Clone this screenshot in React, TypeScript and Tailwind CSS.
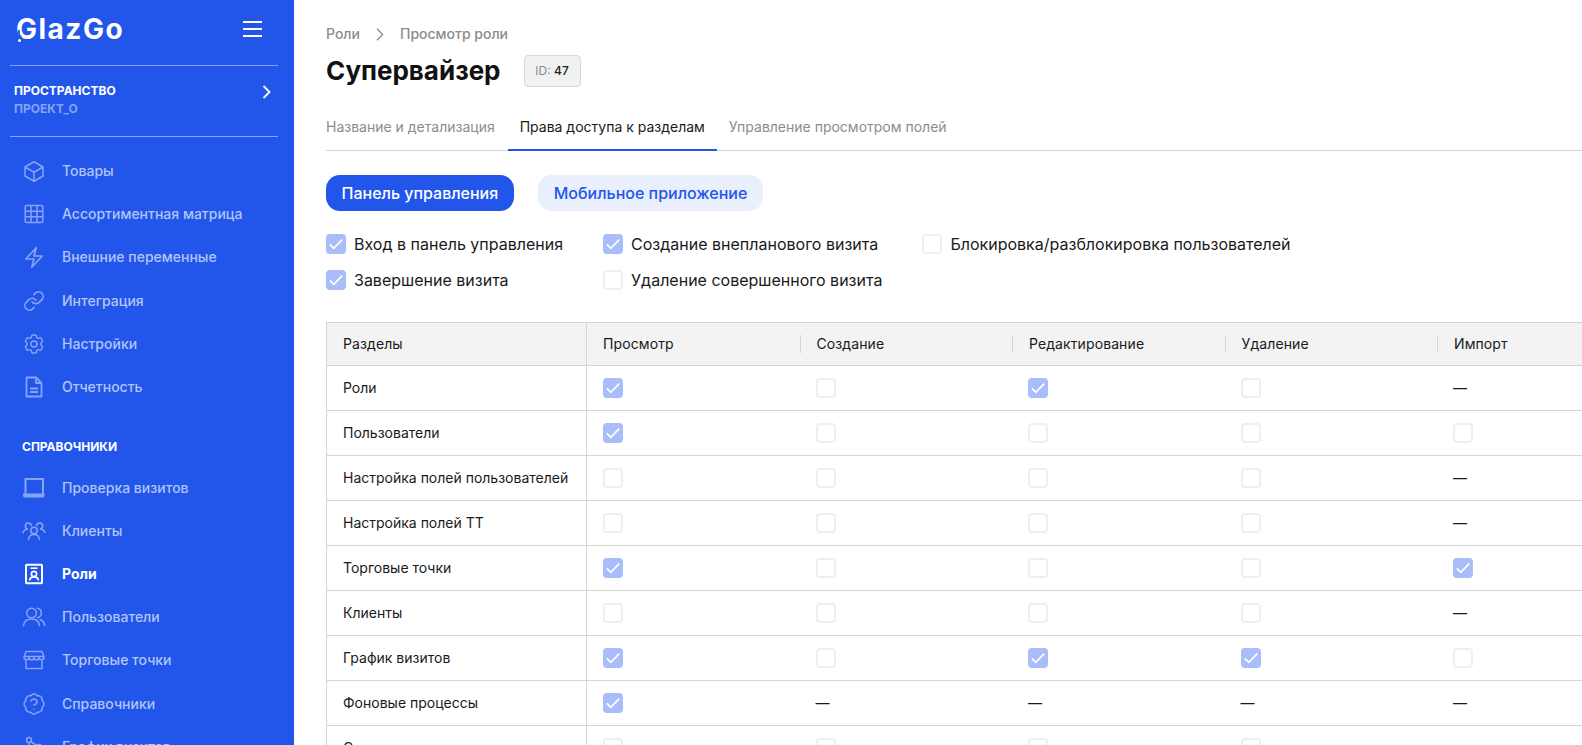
import type { ReactNode } from "react";
import { BadgeQuestionMark, Link } from "lucide-react";
import { HiOutlineBolt, HiOutlineCog6Tooth, HiOutlineCube } from "react-icons/hi2";

const GridIcon = () => (
  <svg width="24" height="24" viewBox="0 0 24 24" fill="none" stroke="currentColor" strokeWidth="1.500">
    <rect x="3.200" y="3.500" width="17.600" height="17" rx="1.500" />
    <path d="M9 3.500v17M15 3.500v17M3.200 9.200h17.600M3.200 14.800h17.600" />
  </svg>
);

const DocIcon = () => (
  <svg width="24" height="24" viewBox="0 0 24 24" fill="none" stroke="currentColor" strokeWidth="1.800" strokeLinejoin="round">
    <path d="M4.500 2.500h9.500l5.500 5.500v13.500h-15z" />
    <path d="M14 2.500V8h5.500" />
    <path d="M8 13.500h8M8 17h8" />
  </svg>
);

const LaptopIcon = () => (
  <svg width="24" height="24" viewBox="0 0 24 24" fill="none" stroke="currentColor" strokeWidth="2">
    <path d="M3.500 18V3h17.500v15" />
    <path d="M1 17.500h21.500v2a2 2 0 0 1-2 2H3a2 2 0 0 1-2-2z" fill="currentColor" stroke="none" />
  </svg>
);

const ClientsIcon = () => (
  <svg width="24" height="24" viewBox="0 0 24 24" fill="none" stroke="currentColor" strokeWidth="1.500" strokeLinecap="round">
    <circle cx="12" cy="11.500" r="3.200" />
    <path d="M6.500 20.500c.4-3.300 2.700-5 5.500-5s5.100 1.700 5.500 5" />
    <path d="M9.300 6.500a3 3 0 1 0-3.300 3.500c-2.200 0-4 1.200-5 3.500" />
    <path d="M14.700 6.500a3 3 0 1 1 3.300 3.500c2.200 0 4 1.200 5 3.500" />
  </svg>
);

const RoleIcon = () => (
  <svg width="24" height="24" viewBox="0 0 24 24" fill="none" stroke="currentColor" strokeWidth="1.600">
    <rect x="4" y="2.800" width="16" height="18.400" rx="0.600" strokeWidth="2" />
    <path d="M8.500 6.200h7" />
    <circle cx="12" cy="12" r="2.600" />
    <path d="M7.500 18.500c.3-2.400 2-3.600 4.500-3.600s4.200 1.200 4.500 3.600" />
  </svg>
);

const UsersIcon = () => (
  <svg width="24" height="24" viewBox="0 0 24 24" fill="none" stroke="currentColor" strokeWidth="1.500" strokeLinecap="round">
    <circle cx="9.500" cy="8" r="4.800" />
    <path d="M1.500 20.500c.5-4 3.700-6.500 8-6.500s7.500 2.500 8 6.500" />
    <path d="M15.500 3.300a4.800 4.800 0 0 1 0 9.400" />
    <path d="M18 14.500c2.500.8 4.200 3 4.800 6" />
  </svg>
);

const StoreIcon = () => (
  <svg width="24" height="24" viewBox="0 0 24 24" fill="none" stroke="currentColor" strokeWidth="1.500" strokeLinejoin="round">
    <path d="M4 3.500h16l2 5.500a2.500 2.500 0 0 1-5 .5 2.500 2.500 0 0 1-5 0 2.500 2.500 0 0 1-5 0 2.500 2.500 0 0 1-5-.5z" />
    <path d="M2 8.500h20" />
    <path d="M4 12.500v8h16v-8" />
  </svg>
);

const ScheduleIcon = () => (
  <svg width="24" height="24" viewBox="0 0 24 24" fill="none" stroke="currentColor" strokeWidth="1.500">
    <circle cx="7" cy="5" r="2.500" />
    <circle cx="17" cy="12" r="2.500" />
    <circle cx="7" cy="19" r="2.500" />
    <path d="M9 7l6 3.500M7 7.500v9" />
  </svg>
);

const topItems: { label: string; icon: ReactNode }[] = [
  { label: "Товары", icon: <HiOutlineCube size={25} strokeWidth={1.5} /> },
  { label: "Ассортиментная матрица", icon: <GridIcon /> },
  { label: "Внешние переменные", icon: <HiOutlineBolt size={25} strokeWidth={1.7} /> },
  { label: "Интеграция", icon: <Link size={22} strokeWidth={1.8} /> },
  { label: "Настройки", icon: <HiOutlineCog6Tooth size={26} strokeWidth={1.4} /> },
  { label: "Отчетность", icon: <DocIcon /> },
];

const refItems: { label: string; icon: ReactNode; active?: boolean }[] = [
  { label: "Проверка визитов", icon: <LaptopIcon /> },
  { label: "Клиенты", icon: <ClientsIcon /> },
  { label: "Роли", icon: <RoleIcon />, active: true },
  { label: "Пользователи", icon: <UsersIcon /> },
  { label: "Торговые точки", icon: <StoreIcon /> },
  { label: "Справочники", icon: <BadgeQuestionMark size={26} strokeWidth={1.5} /> },
  { label: "График визитов", icon: <ScheduleIcon /> },
];

// c - отмечено, u - пусто, d - прочерк
const rows: [string, string][] = [
  ["Роли", "cucud"],
  ["Пользователи", "cuuuu"],
  ["Настройка полей пользователей", "uuuud"],
  ["Настройка полей ТТ", "uuuud"],
  ["Торговые точки", "cuuuc"],
  ["Клиенты", "uuuud"],
  ["График визитов", "cuccu"],
  ["Фоновые процессы", "cdddd"],
  ["Справочники", "uuuud"],
];

const columns = ["Просмотр", "Создание", "Редактирование", "Удаление", "Импорт"];

const Box = ({ checked }: { checked: boolean }) =>
  checked ? (
    <span className="flex h-5 w-5 shrink-0 items-center justify-center rounded-[4px] bg-[#a8bdf9]">
      <svg width="16" height="16" viewBox="0 0 16 16" fill="none" stroke="#fff" strokeWidth="1.800">
        <path d="M1.800 8.300l4 4 8.400-8.600" />
      </svg>
    </span>
  ) : (
    <span className="h-5 w-5 shrink-0 rounded-[4px] border-2 border-[#efefef] bg-white" />
  );

const NavItem = ({ label, icon, active }: { label: string; icon: ReactNode; active?: boolean }) => (
  <div className="flex h-[43.2px] items-center gap-4 pl-[22px]">
    <span className={active ? "flex w-6 justify-center text-white" : "flex w-6 justify-center text-[#86a3f6]"}>{icon}</span>
    <span className={active ? "text-sm font-bold text-white" : "text-sm font-medium text-[#b1c5fb]"}>{label}</span>
  </div>
);

const Permission = ({ label, checked }: { label: string; checked: boolean }) => (
  <div className="flex items-center gap-2">
    <Box checked={checked} />
    <span className="text-base leading-5 text-[#1a1a1a]">{label}</span>
  </div>
);

export default function App() {
  return (
    <div className="flex h-screen overflow-hidden bg-white font-['Inter',sans-serif]">
      <aside className="w-[294px] shrink-0 bg-[#2256eb]">
        <div className="flex h-[65px] items-center justify-between pb-[7px] pl-4 pr-8">
          <div className="relative text-[28px] leading-8 font-bold tracking-[1.5px] text-white">
            GlazGo
            <svg className="absolute top-0 left-0" width="22" height="32" viewBox="0 0 22 32" fill="none">
              <path d="M3 17c-.5 3 .5 6 3 8" stroke="#2256eb" strokeWidth="1.800" />
              <circle cx="3.500" cy="27.500" r="1.500" fill="#fff" />
            </svg>
          </div>
          <svg width="20" height="16" viewBox="0 0 20 16" stroke="#fff" strokeWidth="2">
            <path d="M1 1h19M1 8h19M1 15h19" />
          </svg>
        </div>
        <div className="mx-2.5 w-[268px] border-y border-[#8ba7f6] pt-4 pb-[18px]">
          <div className="flex items-center justify-between pl-1 pr-[7px]">
            <div>
              <div className="text-xs leading-[18px] font-bold text-white">ПРОСТРАНСТВО</div>
              <div className="text-xs leading-[18px] font-bold text-[#86a3f6]">ПРОЕКТ_О</div>
            </div>
            <svg className="mb-4" width="9" height="14" viewBox="0 0 9 14" fill="none" stroke="#fff" strokeWidth="1.800">
              <path d="M1.500 1l6 6-6 6" />
            </svg>
          </div>
        </div>
        <nav className="mt-[12.5px]">
          {topItems.map((item) => (
            <NavItem key={item.label} {...item} />
          ))}
        </nav>
        <div className="mt-[30px] mb-[11.5px] pl-[22px] text-xs leading-4 font-bold text-white">СПРАВОЧНИКИ</div>
        <nav>
          {refItems.map((item) => (
            <NavItem key={item.label} {...item} />
          ))}
        </nav>
      </aside>

      <main className="min-w-0 flex-1 overflow-hidden pt-6 pl-8">
        <div className="flex h-5 items-center text-sm font-medium text-[#8c8c8c]">
          <span>Роли</span>
          <svg className="mx-4" width="8" height="13" viewBox="0 0 8 13" fill="none" stroke="#8c8c8c" strokeWidth="1.300">
            <path d="M1 .8l5.600 5.700L1 12.200" />
          </svg>
          <span>Просмотр роли</span>
        </div>

        <div className="mt-[11px] flex h-8 items-center gap-[23px]">
          <h1 className="text-[26px] leading-8 font-bold text-[#111]">Супервайзер</h1>
          <span className="flex h-8 w-[57px] items-center justify-center rounded-[4px] border border-[#d8d8d8] bg-[#f1f1f1] text-xs text-[#8c8c8c]">
            ID:&nbsp;<span className="font-medium text-[#222]">47</span>
          </span>
        </div>

        <div className="mt-[30px] flex h-[34px] border-b border-[#d5d5d5] text-sm">
          <div className="pr-[13px] text-[#8c8c8c]">Название и детализация</div>
          <div className="-mb-px border-b-2 border-[#2256eb] px-3 text-[#1a1a1a]">Права доступа к разделам</div>
          <div className="px-3 text-[#8c8c8c]">Управление просмотром полей</div>
        </div>

        <div className="mt-6 flex gap-6">
          <button className="h-9 rounded-[14px] bg-[#2256eb] px-[15.5px] text-base font-medium text-white">Панель управления</button>
          <button className="h-9 rounded-[14px] bg-[#e9effd] px-4 text-base font-medium text-[#2256eb]">Мобильное приложение</button>
        </div>

        <div className="mt-[23px] grid w-max grid-cols-[auto_auto_auto] gap-x-10 gap-y-4">
          <Permission label="Вход в панель управления" checked />
          <Permission label="Создание внепланового визита" checked />
          <Permission label="Блокировка/разблокировка пользователей" checked={false} />
          <Permission label="Завершение визита" checked />
          <Permission label="Удаление совершенного визита" checked={false} />
        </div>

        <div className="mt-8 w-[1325px] border-t border-l border-[#d5d5d5] text-sm text-[#1a1a1a]">
          <div className="grid h-[43px] grid-cols-[260px_repeat(5,212.5px)] border-b border-[#d5d5d5] bg-[#f3f3f3] tracking-[0.1px]">
            <div className="flex items-center border-r border-[#d5d5d5] pl-4">Разделы</div>
            {columns.map((col, i) => (
              <div key={col} className="flex items-center gap-4">
                <span className={i === 0 ? "hidden" : "h-[18px] w-px bg-[#d5d5d5]"} />
                <span className={i === 0 ? "pl-4" : ""}>{col}</span>
              </div>
            ))}
          </div>
          {rows.map(([label, cells], r) => (
            <div key={r} className="grid h-[45px] grid-cols-[260px_repeat(5,212.5px)] border-b border-[#d5d5d5]">
              <div className="flex items-center border-r border-[#d5d5d5] pl-4">{label}</div>
              {cells.split("").map((cell, i) => (
                <div key={i} className="flex items-center pl-4">
                  {cell === "d" ? <span>—</span> : <Box checked={cell === "c"} />}
                </div>
              ))}
            </div>
          ))}
        </div>
      </main>
    </div>
  );
}
